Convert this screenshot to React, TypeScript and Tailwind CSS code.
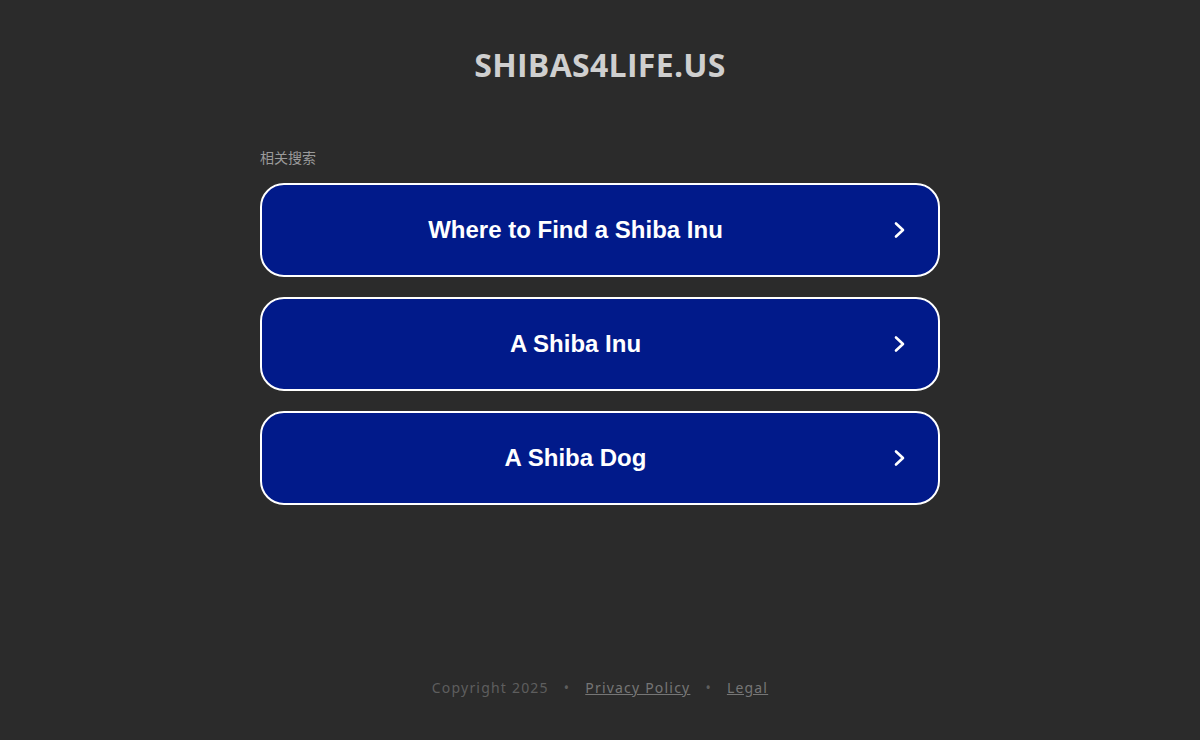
import React from 'react';

const links = ['Where to Find a Shiba Inu', 'A Shiba Inu', 'A Shiba Dog'];

function Chevron() {
  return (
    <svg width="20" height="20" viewBox="0 0 20 20" fill="none" className="shrink-0">
      <path d="M7 3.5L14 10L7 16.5" stroke="white" strokeWidth="2.6" strokeLinecap="round" strokeLinejoin="round" />
    </svg>
  );
}

export default function App() {
  return (
    <div className="min-h-[740px] w-full bg-[#2b2b2b] flex flex-col items-center">
      <h1 className="mt-[43px] text-[32px] leading-[44px] font-bold tracking-[0.3px] text-[#cfcfcf] font-['Open_Sans',sans-serif]">
        SHIBAS4LIFE.US
      </h1>

      <div className="w-[680px] mt-[62px]">
        <div className="text-[14px] leading-[18px] text-[#9a9a9a] font-['Liberation_Sans','Noto_Sans_CJK_SC',sans-serif]">
          相关搜索
        </div>
        <div className="mt-[16px] flex flex-col gap-[20px]">
          {links.map(t => (
            <a
              key={t}
              href="#"
              className="h-[94px] rounded-[24px] border-2 border-white bg-[#011a8a] flex items-center pr-[29px]"
            >
              <span className="flex-1 text-center text-[24px] font-bold text-white font-['Liberation_Sans',Arial,sans-serif]">
                {t}
              </span>
              <Chevron />
            </a>
          ))}
        </div>
      </div>

      <div className="mt-auto mb-[42px] flex items-center gap-[15px] text-[14px] tracking-[1.2px] text-[#5e5e5e] font-['Noto_Sans',sans-serif]">
        <span>Copyright 2025</span>
        <span>•</span>
        <a href="#" className="underline text-[#767676]">Privacy Policy</a>
        <span>•</span>
        <a href="#" className="underline text-[#767676]">Legal</a>
      </div>
    </div>
  );
}
